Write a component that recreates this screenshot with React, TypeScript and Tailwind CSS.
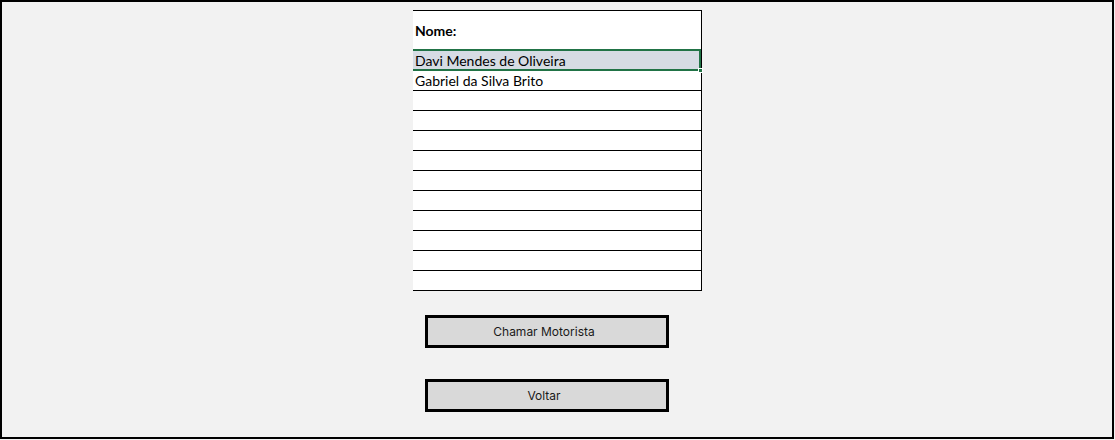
import React from 'react';

const names = ['Davi Mendes de Oliveira', 'Gabriel da Silva Brito'];
const rows = Array.from({ length: 12 }, (_, i) => names[i] ?? '');

export default function App() {
  return (
    <div className="w-[1115px] h-[440px] bg-[#f2f2f2]">
      <div className="w-[1114px] h-[439px] border-2 border-black bg-[#f2f2f2] pt-[8px] pl-[411px]">
        {/* ── Planilha de nomes ─────────────────────────────── */}
        <div className="w-[289px] bg-white border-t border-r border-black font-['Lato',sans-serif] text-[14px] text-black">
          <div className="h-[40px] flex items-center pl-[2px] pb-[1px] font-bold">Nome:</div>
          {rows.map((name, i) => (
            <div
              key={i}
              className={`relative h-[20px] border-b leading-[19px] pl-[2px] ${
                i === 0 ? 'bg-[#d6dce4] border-[#217346]' : 'border-black'
              }`}
            >
              {name}
              {i === 0 && (
                <>
                  <div className="absolute -top-[2px] left-0 right-0 h-[22px] border-t-2 border-b-2 border-r-2 border-[#217346]" />
                  <div className="absolute -bottom-[3px] -right-[2px] w-[5px] h-[5px] bg-[#217346] border border-white" />
                </>
              )}
            </div>
          ))}
        </div>

        {/* ── Ações ─────────────────────────────────────────── */}
        <div className="flex flex-col gap-[31px] mt-[24px] ml-[12px] font-['Inter',sans-serif] text-[12px] text-[#1a1a1a]">
          <button className="w-[244px] h-[33px] border-[3px] border-black bg-[#d9d9d9] flex items-center justify-center pr-[6px]">
            Chamar Motorista
          </button>
          <button className="w-[244px] h-[33px] border-[3px] border-black bg-[#d9d9d9] flex items-center justify-center pr-[6px]">
            Voltar
          </button>
        </div>
      </div>
    </div>
  );
}
